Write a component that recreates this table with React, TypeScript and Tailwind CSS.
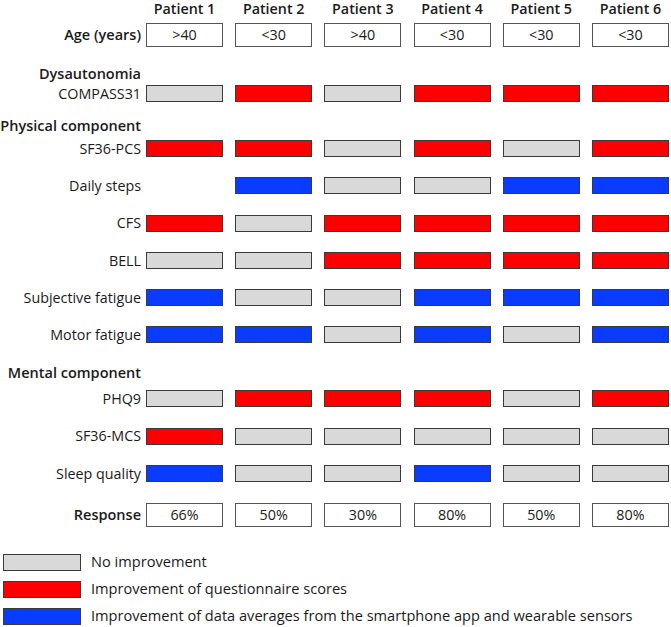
import React from "react";

type Cell = "g" | "r" | "b" | "";

const fill: Record<string, string> = {
  g: "bg-[#d9d9d9]",
  r: "bg-[#ff0000]",
  b: "bg-[#0a3cff]",
};

const Label = ({ children, bold }: { children: React.ReactNode; bold?: boolean }) => (
  <div className={`w-[141px] mr-[5px] shrink-0 text-right whitespace-nowrap ${bold ? "font-semibold text-[14.5px]" : ""}`}>
    {children}
  </div>
);

const BarRow = ({ label, cells, className }: { label: string; cells: Cell[]; className?: string }) => (
  <div className={`flex items-center h-[17px] ${className ?? ""}`}>
    <Label>{label}</Label>
    <div className="flex gap-[12.2px]">
      {cells.map((c, i) => (
        <div
          key={i}
          className={`w-[77px] h-[17px] ${c ? `${fill[c]} border border-[#3a3a3a]` : ""}`}
        />
      ))}
    </div>
  </div>
);

const BoxRow = ({ label, values, className }: { label: string; values: string[]; className?: string }) => (
  <div className={`flex items-center h-[24px] ${className ?? ""}`}>
    <Label bold>{label}</Label>
    <div className="flex gap-[12.2px]">
      {values.map((v, i) => (
        <div
          key={i}
          className="w-[77px] h-[24px] bg-white border border-[#555] flex items-center justify-center"
        >
          {v}
        </div>
      ))}
    </div>
  </div>
);

const Heading = ({ children, className }: { children: React.ReactNode; className?: string }) => (
  <div className={`flex items-center h-[18px] ${className ?? ""}`}>
    <Label bold>{children}</Label>
  </div>
);

const App = () => {
  return (
    <div
      className="w-[671px] h-[627px] bg-white text-[14.3px] text-[#1a1a1a] overflow-hidden"
      style={{ fontFamily: '"Open Sans", "Liberation Sans", sans-serif' }}
    >
      {/* column headers */}
      <div className="flex items-center h-[18px]">
        <div className="w-[146px] shrink-0" />
        <div className="flex gap-[12.2px] font-semibold">
          {[1, 2, 3, 4, 5, 6].map((n) => (
            <div key={n} className="w-[77px] text-center">
              Patient {n}
            </div>
          ))}
        </div>
      </div>

      <BoxRow label="Age (years)" values={[">40", "<30", ">40", "<30", "<30", "<30"]} className="mt-[5px]" />

      <Heading className="mt-[18px]">Dysautonomia</Heading>
      <BarRow label="COMPASS31" cells={["g", "r", "g", "r", "r", "r"]} className="mt-[2px]" />

      <Heading className="mt-[15px]">Physical component</Heading>
      <BarRow label="SF36-PCS" cells={["r", "r", "g", "r", "g", "r"]} className="mt-[5px]" />
      <BarRow label="Daily steps" cells={["", "b", "g", "g", "b", "b"]} className="mt-[20.3px]" />
      <BarRow label="CFS" cells={["r", "g", "r", "r", "r", "r"]} className="mt-[20.3px]" />
      <BarRow label="BELL" cells={["g", "g", "r", "r", "r", "r"]} className="mt-[20.3px]" />
      <BarRow label="Subjective fatigue" cells={["b", "g", "g", "b", "b", "b"]} className="mt-[20.3px]" />
      <BarRow label="Motor fatigue" cells={["b", "b", "g", "b", "g", "b"]} className="mt-[20.3px]" />

      <Heading className="mt-[20.3px]">Mental component</Heading>
      <BarRow label="PHQ9" cells={["g", "r", "r", "r", "g", "r"]} className="mt-[8.5px]" />
      <BarRow label="SF36-MCS" cells={["r", "g", "g", "g", "g", "g"]} className="mt-[20.3px]" />
      <BarRow label="Sleep quality" cells={["b", "g", "g", "b", "g", "g"]} className="mt-[20.3px]" />

      <BoxRow label="Response" values={["66%", "50%", "30%", "80%", "50%", "80%"]} className="mt-[21px]" />

      {/* legend */}
      <div className="mt-[27px] pl-[3px] flex flex-col gap-[10px] text-[14.6px]">
        {[
          ["g", "No improvement"],
          ["r", "Improvement of questionnaire scores"],
          ["b", "Improvement of data averages from the smartphone app and wearable sensors"],
        ].map(([c, t]) => (
          <div key={c} className="flex items-center h-[17px]">
            <div className={`w-[78px] h-[17px] ${fill[c]} border border-[#3a3a3a] shrink-0`} />
            <span className="ml-[10px] whitespace-nowrap">{t}</span>
          </div>
        ))}
      </div>
    </div>
  );
};

export default App;
